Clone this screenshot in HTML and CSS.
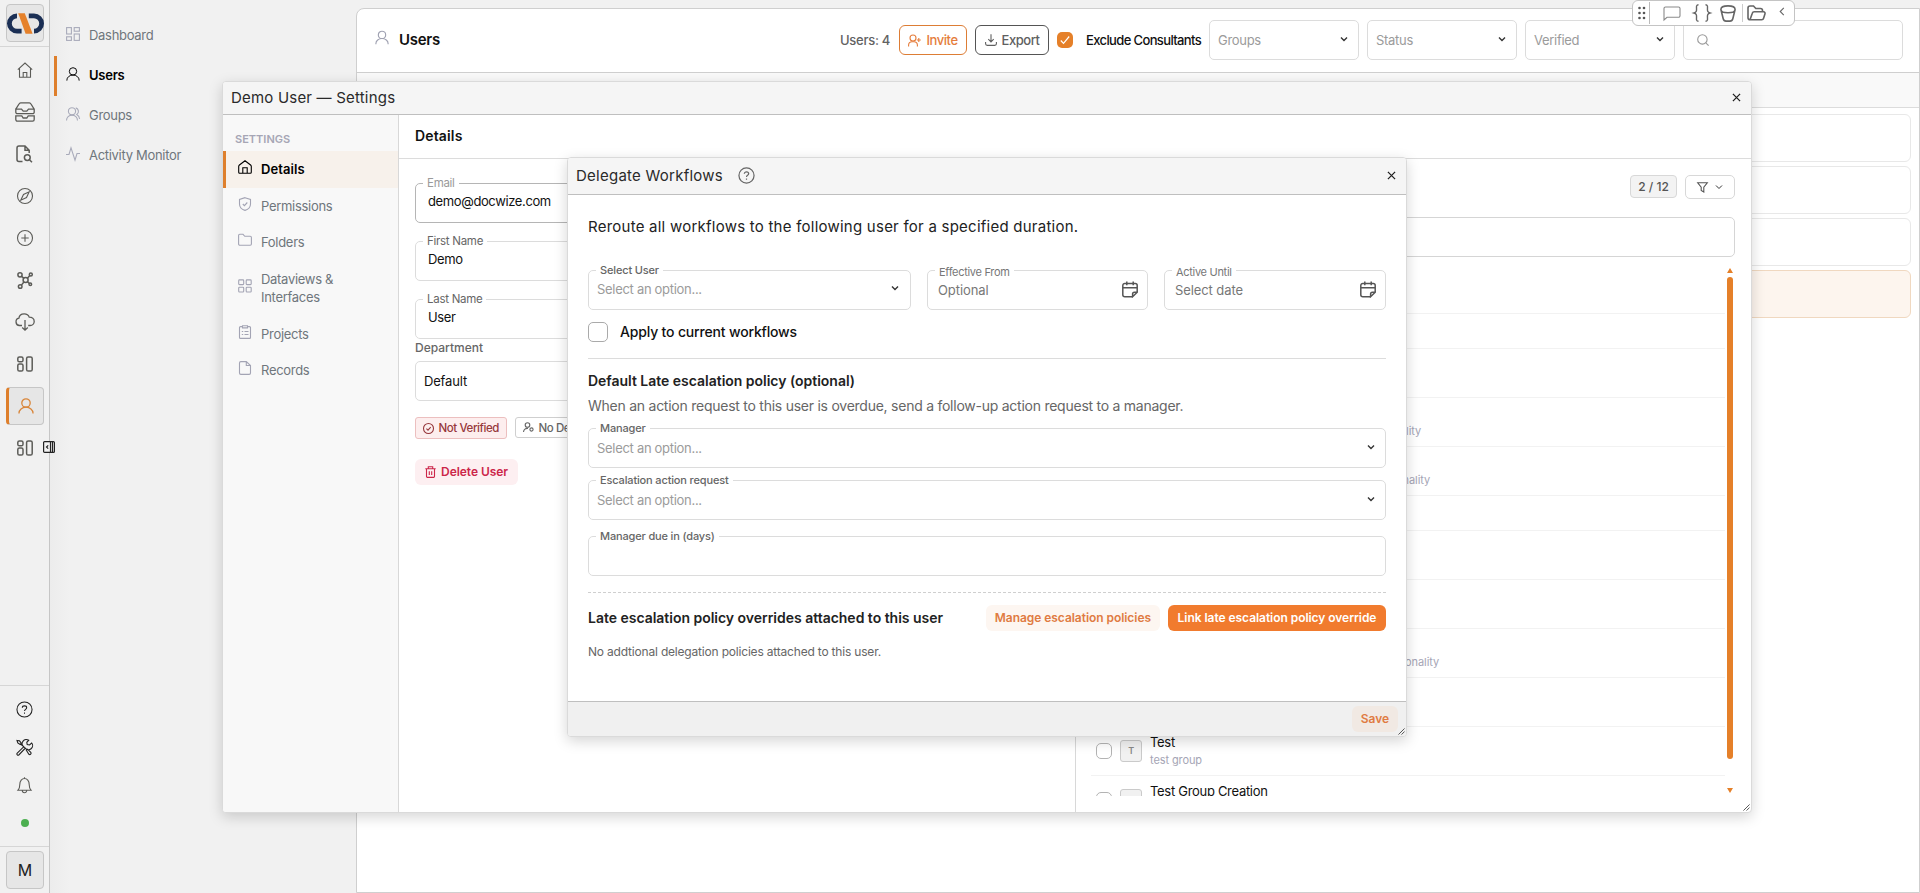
FILE: index.html
```html
<!DOCTYPE html>
<html lang="en">
<head>
<meta charset="utf-8">
<title>Users</title>
<link rel="stylesheet" href="styles.css">
</head>
<body>
<svg class="defs" aria-hidden="true">
  <symbol id="user" viewBox="0 0 16 16"><circle cx="8" cy="5" r="4.2"/><path d="M1 15.6v-.6a7 5.8 0 0 1 14 0v.6"/></symbol>
  <symbol id="chev" viewBox="0 0 10 10"><path d="M2 3.500 5 6.500 8 3.500"/></symbol>
  <symbol id="close" viewBox="0 0 10 10"><path d="M1 1 9 9M9 1 1 9"/></symbol>
  <symbol id="help" viewBox="0 0 18 18"><circle cx="9" cy="9" r="8"/><path d="M6.700 7.200C6.700 4.500 11.300 4.500 11.300 7.200 11.300 8.900 9 8.800 9 10.600M9 12.300v1.200"/></symbol>
  <symbol id="home" viewBox="0 0 16 16"><path d="M.8 7.600 8 1 15.200 7.600M2.500 6.200V15.200H13.500V6.200M6.200 15V10.500H9.800V15"/></symbol>
  <symbol id="board" viewBox="0 0 16 16"><rect x=".8" y="1" width="5.200" height="4.800" rx="1.600"/><rect x=".8" y="8" width="5.200" height="7" rx="1.600"/><rect x="9.600" y="1" width="5.600" height="14" rx="1.600"/></symbol>
  <symbol id="cal" viewBox="0 0 16 17"><path d="M15.200 11.500V4.500a2 2 0 0 0-2-2H2.800a2 2 0 0 0-2 2v9.200a2 2 0 0 0 2 2h7.600M.8 6.800h14.400M4.800.6v3.600M11.200.6v3.600M15.200 11.300l-4.600 4.400v-2.600a1.800 1.800 0 0 1 1.800-1.800Z"/></symbol>
  <symbol id="grip" viewBox="0 0 8 8"><path d="M.5 7.500 7.500.5M4 7.500 7.500 4"/></symbol>
</svg>

<div class="app">
  <nav class="rail">
    <div class="rail-logo"><div class="tile">
      <svg width="37" height="21" viewBox="0 0 37 21"><g fill="none" stroke="#1b2f55" stroke-width="4.800"><path d="M10 2.900A7.600 7.600 0 0 0 10 18.100H14.600"/><path d="M21.800 2.900H27A7.600 7.600 0 0 1 27 18.100"/></g><path d="M11.200.3H17.800L25.600 20.700H18.600Z" fill="#e5812b" stroke="none"/></svg>
    </div></div>
    <div class="rail-main">
      <div class="cell"><svg class="i16"><use href="#home"/></svg></div>
      <div class="cell"><svg class="wide" width="20" height="20" viewBox="0 0 20 20"><path d="M.8 7.200 4 2A2 2 0 0 1 5.700.8h8.600A2 2 0 0 1 16 2l3.200 5.200v3a1.500 1.500 0 0 1-1.500 1.500H2.300A1.500 1.500 0 0 1 .8 10.200V7.200H6.500L8.200 9.200h3.600L13.500 7.200h5.700M.8 13.800H6.800L8.200 16h3.600l1.400-2.200h6v3.800a1.600 1.600 0 0 1-1.600 1.600H2.400A1.600 1.600 0 0 1 .8 17.600Z"/></svg></div>
      <div class="cell"><svg class="bold" width="17" height="18" viewBox="0 0 17 18"><path d="M6.500 16.500H3A2 2 0 0 1 1 14.500V3A2 2 0 0 1 3 1H9L13.200 5.200V8M9 1V5.200H13.200"/><circle cx="11.300" cy="12.600" r="2.900"/><path d="M13.500 14.800 16 17.300"/></svg></div>
      <div class="cell"><svg class="i16" viewBox="0 0 16 16"><circle cx="8" cy="8" r="7.500"/><path d="M12.200 3.800 9.500 9.500 3.800 12.200 6.500 6.500Z"/></svg></div>
      <div class="cell"><svg class="i16" viewBox="0 0 16 16"><circle cx="8" cy="8" r="7.500"/><path d="M8 4.300v7.400M4.300 8h7.400"/></svg></div>
      <div class="cell"><svg class="bold" width="16" height="17" viewBox="0 0 16 17"><circle cx="3" cy="2.800" r="2.100"/><circle cx="13.800" cy="2.500" r="1.500"/><circle cx="8.600" cy="8" r="2.500"/><circle cx="13.300" cy="12.300" r="1.300"/><circle cx="3.200" cy="14.500" r="1.800"/><path d="M4.500 4.400 6.800 6.200M10.400 6.200 12.800 3.600M10.500 9.800 12.300 11.400M6.900 10 4.400 13.100"/></svg></div>
      <div class="cell"><svg class="wide" width="20" height="18" viewBox="0 0 20 18"><path d="M7 12.500H4.500a3.700 3.700 0 0 1-.6-7.300C4.200 2.500 6.500.8 9.200.8c2.500 0 4.300 1.300 5 3.300 2.800 0 5 1.900 5 4.300s-1.800 4.100-4 4.100h-2M10 7v10M7.200 14.500 10 17.200l2.800-2.700"/></svg></div>
      <div class="cell"><svg class="i16 bold"><use href="#board"/></svg></div>
      <div class="cell"><div class="tile tile-on"><svg class="i16"><use href="#user"/></svg></div></div>
      <div class="cell"><svg class="i16 bold"><use href="#board"/></svg></div>
    </div>
    <div class="rail-foot">
      <div class="fcell dark"><svg width="17" height="17"><use href="#help"/></svg></div>
      <div class="fcell dark"><svg width="17" height="17" viewBox="0 0 17 17"><path d="M1 14.300 7.800 7.700 9.300 9.200 2.800 16A1.300 1.300 0 0 1 1 14.300ZM7.800 7.700A4 4 0 0 1 12.700 1.300L10.800 3.300 11.200 5.600 13.500 6 15.700 4A4 4 0 0 1 9.300 9.200M1 1.500 3.500 1.800 5.300 4.200 4.200 5.500 1.800 4ZM4.800 5 6.800 7M10.300 11.200 11.500 10.200 14.800 13.300A1.400 1.400 0 0 1 12.900 15.300Z"/></svg></div>
      <div class="fcell"><svg width="15" height="17" viewBox="0 0 15 17"><path d="M1 13.200C2.500 11.500 2.800 10 2.800 7.500 2.800 4 5 1.500 7.500 1.500S12.200 4 12.200 7.500C12.200 10 12.500 11.500 14 13.200ZM5.300 13.500a2.200 2.200 0 0 0 4.400 0M7.500.3V1.500"/></svg></div>
      <div class="fcell"><span class="dot"></span></div>
    </div>
    <div class="rail-me"><div class="tile">M</div></div>
    <svg class="collapse" viewBox="0 0 12 12"><rect x=".6" y=".6" width="10.800" height="10.800" rx="1"/><path d="M7.500 1v10M9.500 1v10M5.200 4.300 3.500 6 5.200 7.700"/></svg>
  </nav>

  <aside class="side">
    <a class="nav"><svg class="i14" viewBox="0 0 14 14"><rect x=".6" y=".6" width="4.800" height="6.400"/><rect x="8.200" y=".6" width="5.200" height="3.600"/><rect x=".6" y="9.800" width="4.800" height="3.600"/><rect x="8.200" y="7" width="5.200" height="6.400"/></svg>Dashboard</a>
    <a class="nav on"><svg class="i14"><use href="#user"/></svg>Users</a>
    <a class="nav"><svg class="i14" viewBox="0 0 14 14"><circle cx="6" cy="4.300" r="3.600"/><path d="M.5 13.400a5.500 5.300 0 0 1 11 0M9.800.9a3.600 3.600 0 0 1 1 6.500 5.500 5.500 0 0 1 2.800 4.600"/></svg>Groups</a>
    <a class="nav"><svg class="i14" viewBox="0 0 14 14"><path d="M0 7.500H3L5 .8 9 13.200 11 6.500H14"/></svg>Activity Monitor</a>
  </aside>

  <main class="panel">
    <header class="bar">
      <svg class="bar-ico"><use href="#user"/></svg>
      <h1>Users</h1>
      <span class="count">Users: 4</span>
      <button class="btn invite"><svg width="13" height="13" viewBox="0 0 13 13"><circle cx="5" cy="4" r="3"/><path d="M.6 12.500V11A3.400 3.400 0 0 1 4 7.800H6A3.400 3.400 0 0 1 9.400 11v1.500M10.800 4v4M8.800 6h4"/></svg>Invite</button>
      <button class="btn export"><svg width="12" height="12" viewBox="0 0 12 12"><path d="M6 .3V7.700M3.300 5.200 6 7.900 8.700 5.200M.6 8v1.800a1.600 1.600 0 0 0 1.600 1.600h7.600a1.600 1.600 0 0 0 1.600-1.600V8"/></svg>Export</button>
      <span class="check"><svg width="10" height="10" viewBox="0 0 10 10"><path d="M.8 5.500 3.500 8.300 9.200 1.500"/></svg></span>
      <span class="excl">Exclude Consultants</span>
      <div class="sel">Groups<svg class="chev"><use href="#chev"/></svg></div>
      <div class="sel">Status<svg class="chev"><use href="#chev"/></svg></div>
      <div class="sel">Verified<svg class="chev"><use href="#chev"/></svg></div>
      <div class="search"><svg width="12" height="12" viewBox="0 0 12 12"><circle cx="5.400" cy="5.400" r="4.700"/><path d="M8.800 8.800 11.600 11.600"/></svg></div>
    </header>
    <div class="thead"></div>
    <div class="rows"><div></div><div></div><div></div><div class="sel-row"></div></div>
  </main>
</div>

<div class="toolbar">
  <svg width="8" height="14" viewBox="0 0 8 14" class="dots"><circle cx="1.500" cy="2" r="1.300"/><circle cx="6" cy="2" r="1.300"/><circle cx="1.500" cy="7" r="1.300"/><circle cx="6" cy="7" r="1.300"/><circle cx="1.500" cy="12" r="1.300"/><circle cx="6" cy="12" r="1.300"/></svg>
  <i></i>
  <svg class="t-chat" width="18" height="15" viewBox="0 0 18 15"><path d="M1 14V2.500A1.500 1.500 0 0 1 2.500 1h13A1.500 1.500 0 0 1 17 2.500v7.300a1.500 1.500 0 0 1-1.500 1.500H4Z"/></svg>
  <svg class="t-br" width="18" height="18" viewBox="0 0 18 18"><path d="M5.500.8C2 .8 4.300 5 3.300 7.300 2.800 8.500 1 9 1 9s1.800.5 2.300 1.700C4.300 13 2 17.200 5.500 17.200M12.500.8C16 .8 13.700 5 14.700 7.300 15.200 8.500 17 9 17 9s-1.800.5-2.300 1.700C13.700 13 16 17.200 12.500 17.200"/></svg>
  <svg class="t-bk" width="16" height="17" viewBox="0 0 16 17"><path d="M.9 4.500C.9 2.200 4 .9 8 .9S15.100 2.200 15.100 4.500 12 7.800 8 7.800.9 6.800.9 4.500L3.200 13.800C3.600 15.400 4.300 16.100 6 16.100h4c1.700 0 2.400-.7 2.800-2.300L15.100 4.500"/></svg>
  <i class="short"></i>
  <svg class="t-fd" width="19" height="16" viewBox="0 0 19 16"><path d="M3 14.800C1.500 14.800 1 14 1 12.800V3A2 2 0 0 1 3 1H6.500L8.800 3.500H13.500A2 2 0 0 1 15.500 5.500V6.800M3 14.800 5.300 8.200A2 2 0 0 1 7.200 6.800H16.500A1.500 1.500 0 0 1 18 8.800L16.600 13.300A2 2 0 0 1 14.700 14.800Z"/></svg>
  <svg class="t-cv" width="6" height="9" viewBox="0 0 6 9"><path d="M4.800.8 1.200 4.500 4.800 8.200"/></svg>
</div>

<section class="win settings">
  <header class="win-head">Demo User — Settings<svg class="x"><use href="#close"/></svg></header>
  <div class="win-cols">
    <aside class="menu">
      <div class="cap">SETTINGS</div>
      <a class="on"><svg class="i14"><path d="M.7 6.600A2 2 0 0 1 1.400 5L7 .8 12.600 5A2 2 0 0 1 13.300 6.600V12.300A1 1 0 0 1 12.300 13.300H1.700A1 1 0 0 1 .7 12.300ZM4.800 13V7.800H9.200V13"/></svg>Details</a>
      <a><svg class="i14"><path d="M7 .7 12.500 2.500V7C12.500 10.500 10 12.500 7 13.400 4 12.500 1.500 10.500 1.500 7V2.500ZM4.800 7 6.400 8.600 9.300 5.500"/></svg>Permissions</a>
      <a><svg class="i14"><path d="M.6 11V2.500A1.200 1.200 0 0 1 1.800 1.300H5L6.800 3.300H12.200A1.200 1.200 0 0 1 13.400 4.500V11A1.200 1.200 0 0 1 12.200 12.200H1.800A1.200 1.200 0 0 1 .6 11Z"/></svg>Folders</a>
      <a class="two"><svg class="i14"><rect x=".7" y=".9" width="5" height="4.700" rx=".8"/><rect x="8.200" y=".9" width="5" height="4.700" rx=".8"/><rect x=".7" y="8.300" width="5" height="4.700" rx=".8"/><rect x="8.200" y="8.300" width="5" height="4.700" rx=".8"/></svg><span>Dataviews &amp;<br>Interfaces</span></a>
      <a><svg class="i14"><path d="M4.500 1.600H2.500A1 1 0 0 0 1.500 2.600V12.400A1 1 0 0 0 2.500 13.400H11.500A1 1 0 0 0 12.500 12.400V2.600A1 1 0 0 0 11.500 1.600H9.500M4.500.7H9.500V2.900H4.500ZM3.800 6.500H5.200M6.500 6.500H10.500M3.800 9.500H5.200M6.500 9.500H10.500"/></svg>Projects</a>
      <a><svg class="i14"><path d="M8.300.6H2.800A1.300 1.300 0 0 0 1.500 1.900V12.100A1.300 1.300 0 0 0 2.800 13.400H11.200A1.300 1.300 0 0 0 12.500 12.100V4.500ZM8.300.6V4.500H12.500"/></svg>Records</a>
    </aside>
    <div class="content">
      <h2>Details</h2>
      <div class="split">
        <div class="form">
          <fieldset class="fld strong"><legend class="muted">Email</legend>demo@docwize.com</fieldset>
          <fieldset class="fld"><legend>First Name</legend>Demo</fieldset>
          <fieldset class="fld"><legend>Last Name</legend>User</fieldset>
          <label class="dep">Department</label>
          <div class="depbox">Default</div>
          <div class="tags">
            <span class="tag bad"><svg width="11" height="11" viewBox="0 0 11 11"><circle cx="5.500" cy="5.500" r="5"/><path d="M3.400 5.600 5 7.100 7.700 4.200"/></svg>Not Verified</span>
            <span class="tag"><svg width="11" height="11" viewBox="0 0 11 11"><circle cx="4.500" cy="3" r="2.300"/><path d="M.5 10C.8 7.500 2.500 6 5 6.400"/><circle cx="8.500" cy="7.500" r="1.600"/></svg>No Delegate</span>
          </div>
          <button class="del"><svg width="11" height="12" viewBox="0 0 11 12"><path d="M.3 2.800H10.700M3.300 2.600V.7H7.700V2.600M1.500 3V10.200A1.200 1.200 0 0 0 2.700 11.400H8.300A1.200 1.200 0 0 0 9.500 10.200V3M4.300 5.300V9M6.700 5.300V9"/></svg>Delete User</button>
        </div>
        <div class="groups">
          <div class="gtools"><span class="badge">2 / 12</span><span class="filter"><svg width="11" height="11" viewBox="0 0 11 11"><path d="M.7.800H10.300L6.800 5.200V10L4.200 8.500V5.200Z"/></svg><svg class="chev"><use href="#chev"/></svg></span></div>
          <div class="gsearch"></div>
          <div class="gbody">
            <div class="glist">
              <div class="g"></div><div class="g s"></div><div class="g"></div>
              <div class="g"><span class="tail w1">functionality</span></div>
              <div class="g"><span class="tail w2">functionality</span></div>
              <div class="g s"></div><div class="g"></div><div class="g"></div>
              <div class="g"><span class="tail w3">functionality</span></div>
              <div class="g"></div>
              <div class="g row"><span class="box"></span><span class="av">T</span><span class="nm">Test<small>test group</small></span></div>
              <div class="g row"><span class="box"></span><span class="av">T</span><span class="nm">Test Group Creation</span></div>
            </div>
            <div class="sbar"><b class="up"></b><b class="thumb"></b><b class="down"></b></div>
          </div>
        </div>
      </div>
    </div>
  </div>
  <svg class="grip"><use href="#grip"/></svg>
</section>

<section class="win delegate">
  <header class="win-head tall">Delegate Workflows<svg class="hlp"><use href="#help"/></svg><svg class="x"><use href="#close"/></svg></header>
  <div class="dbody">
    <p class="lead">Reroute all workflows to the following user for a specified duration.</p>
    <div class="trio">
      <fieldset class="fld a"><legend>Select User</legend><span class="ph">Select an option...</span><svg class="chev"><use href="#chev"/></svg></fieldset>
      <div class="fld date"><span class="lg">Effective From</span><span>Optional</span><svg width="16" height="17"><use href="#cal"/></svg></div>
      <div class="fld date"><span class="lg">Active Until</span><span>Select date</span><svg width="16" height="17"><use href="#cal"/></svg></div>
    </div>
    <label class="apply"><span class="cb"></span>Apply to current workflows</label>
    <h3>Default Late escalation policy (optional)</h3>
    <p class="para">When an action request to this user is overdue, send a follow-up action request to a manager.</p>
    <fieldset class="fld a low"><legend>Manager</legend><span class="ph">Select an option...</span><svg class="chev"><use href="#chev"/></svg></fieldset>
    <fieldset class="fld a low esc"><legend>Escalation action request</legend><span class="ph">Select an option...</span><svg class="chev"><use href="#chev"/></svg></fieldset>
    <fieldset class="fld a due"><legend>Manager due in (days)</legend></fieldset>
    <div class="over"><h3>Late escalation policy overrides attached to this user</h3><button class="soft">Manage escalation policies</button><button class="solid">Link late escalation policy override</button></div>
    <p class="none">No addtional delegation policies attached to this user.</p>
  </div>
  <footer class="dfoot"><button class="soft save">Save</button></footer>
  <svg class="grip"><use href="#grip"/></svg>
</section>
</body>
</html>
```
FILE: styles.css
```css
* { box-sizing: border-box; }
body { margin: 0; width: 1920px; height: 893px; overflow: hidden; background: #f1f1f1; font: 13px/18px Inter, "Liberation Sans", sans-serif; letter-spacing: -.3px; color: #111; }
h1, h2, h3, p, fieldset { margin: 0; padding: 0; border: 0; min-width: 0; }
button { font: inherit; letter-spacing: inherit; border: 0; margin: 0; padding: 0; }
svg { fill: none; stroke: currentColor; stroke-width: 1.1; flex: none; overflow: visible; }
.defs { position: absolute; width: 0; height: 0; }
.i16 { width: 16px; height: 16px; }
.i14 { width: 14px; height: 14px; }
.bold { stroke-width: 1.5; }
.wide { stroke-width: 1.3; }
.chev { width: 10px; height: 10px; stroke-width: 1.4; color: #333; }
.app { display: flex; height: 893px; }

.rail { position: relative; width: 50px; flex: none; border-right: 1px solid #c6c6c6; display: flex; flex-direction: column; color: #5c5c58; background: #f1f1f1; }
.rail-logo { height: 47px; padding: 4px 0 0 6px; border-bottom: 1px solid #d6d6d6; }
.tile { width: 38px; height: 38px; border: 1px solid #c6c6c6; border-radius: 4px; background: #e6e6e6; display: flex; align-items: center; justify-content: center; color: #222; font-size: 16px; letter-spacing: 0; }
.rail-main { flex: 1; padding: 2px 0 0; }
.cell { height: 42px; display: flex; align-items: center; justify-content: center; }
.cell .tile { margin-left: 1px; }
.cell .tile-on { border-left: 3px solid #de7f2c; color: #d9863a; }
.tile-on svg { stroke-width: 1.3; }
.rail-foot { border-top: 1px solid #d6d6d6; height: 161px; padding: 4px 0 0; }
.fcell { height: 38px; display: flex; align-items: center; justify-content: center; }
.dark { color: #222; }
.dot { width: 8px; height: 8px; border-radius: 50%; background: #4caf50; }
.rail-me { border-top: 1px solid #d6d6d6; height: 47px; padding: 4px 0 0 6px; }
.collapse { position: absolute; left: 43px; top: 441px; width: 12px; height: 12px; color: #222; stroke-width: 1.2; background: #f1f1f1; z-index: 1; }

.side { width: 306px; flex: none; padding: 16px 0 0 4px; background: linear-gradient(90deg, #ececec, #f1f1f1 20px); }
.nav { height: 40px; display: flex; align-items: center; gap: 9px; padding: 0 0 2px 9px; border-left: 3px solid transparent; color: #6f767c; }
.nav svg { position: relative; top: -1.5px; color: #a9abba; }
.on { color: #000; font-weight: 600; }
.nav.on { border-left-color: #de7f2c; letter-spacing: -.25px; }
.nav.on svg, .menu .on svg { color: #000; }

.panel { width: 1564px; height: 885px; margin-top: 8px; background: #fff; border: 1px solid #cfcfcf; border-top-left-radius: 8px; }
.bar { height: 64px; border-bottom: 1px solid #cfcfcf; display: flex; align-items: center; padding: 0 16px 1px 18px; }
.bar-ico { width: 14px; height: 15px; color: #a0a2b2; stroke-width: 1.3; position: relative; top: -3px; }
h1 { font-size: 15px; font-weight: 600; margin: 0 auto 0 10px; }
.count { width: 50px; margin-right: 9px; color: #626262; font-weight: 500; white-space: nowrap; letter-spacing: -.28px; }
.btn { height: 30px; border-radius: 6px; background: #fff; display: flex; align-items: center; justify-content: center; gap: 5px; font-weight: 500; margin-right: 8px; letter-spacing: -.45px; }
.invite { width: 68px; border: 1px solid #dd7d35; color: #e57d3c; }
.export { width: 74px; border: 1px solid #555; color: #606060; }
.check { width: 16px; height: 16px; border-radius: 5px; background: #e58029; color: #fff; display: flex; align-items: center; justify-content: center; }
.check svg { stroke-width: 1.2; }
.excl { width: 115px; margin: 0 8px 0 13px; font-weight: 500; letter-spacing: -.63px; white-space: nowrap; }
.sel { width: 150px; height: 40px; border: 1px solid #dcdcdc; border-radius: 5px; margin-right: 8px; padding: 0 9px 0 8px; display: flex; align-items: center; justify-content: space-between; color: #9b9b9b; }
.sel .chev { margin-top: -2px; }
.search { width: 220px; height: 40px; border: 1px solid #dcdcdc; border-radius: 5px; padding: 13px 0 0 13px; color: #999; line-height: 0; }
.thead { height: 35px; background: #f9f9f9; border-bottom: 1px solid #dcdcdc; }
.rows { padding: 6px 8px 0; display: grid; gap: 4px; }
.rows div { height: 48px; border: 1px solid #e8e8e8; border-radius: 6px; }
.rows .sel-row { background: #fdf5ee; border-color: #f0d8c0; }

.toolbar { position: absolute; left: 1632px; top: 0; width: 163px; height: 26px; border: 1px solid #c4c4c4; border-radius: 6px; background: #fff; display: flex; align-items: center; color: #666; padding-left: 5px; }
.toolbar i { width: 1px; height: 22px; background: #bbb; margin-left: 3px; }
.toolbar .short { height: 18px; margin-left: 6px; background: #ccc; }
.dots { fill: #555; stroke: none; }
.t-chat { margin-left: 13px; color: #8a8a8a; }
.t-br { margin-left: 12px; stroke-width: 1.4; }
.t-bk { margin-left: 9px; stroke-width: 1.6; }
.t-fd { margin-left: 4px; stroke-width: 1.6; }
.t-cv { margin: -4px 0 0 13px; }

.win { position: absolute; background: #fff; border: 1px solid #dadada; border-radius: 4px; box-shadow: 0 4px 14px rgba(0,0,0,.17); display: flex; flex-direction: column; overflow: hidden; }
.settings { left: 222px; top: 81px; width: 1530px; height: 732px; }
.delegate { left: 567px; top: 157px; width: 840px; height: 580px; }
.win-head { height: 33px; flex: none; background: #f5f5f5; border-bottom: 1px solid #bfbfbf; display: flex; align-items: center; padding: 0 10px 1px 8px; font-size: 15px; letter-spacing: .2px; color: #2a2a2a; }
.tall { height: 37px; letter-spacing: .25px; }
.x { width: 9px; height: 9px; margin-left: auto; color: #222; stroke-width: 1.4; }
.hlp { width: 17px; height: 17px; margin-left: 15px; color: #666; stroke-width: 1.3; }
.grip { position: absolute; right: 1px; bottom: 1px; width: 7px; height: 7px; color: #444; stroke-width: 1; }
.win-cols { flex: 1; display: flex; min-height: 0; }
.menu { width: 176px; background: #f8f8f8; border-right: 1px solid #d8d8d8; color: #6f767c; }
.cap { height: 36px; padding: 15px 0 0 12px; font-size: 11px; font-weight: 600; letter-spacing: 0; color: #a6a6b5; }
.menu a { height: 36.5px; padding-left: 12px; border-left: 3px solid transparent; display: flex; align-items: center; gap: 9px; line-height: 18.5px; }
.menu svg { position: relative; top: -2px; color: #a3a4b4; }
.menu .two { height: 55px; }
.menu a.on { background: #f7f1eb; border-left-color: #de7f2c; color: #000; letter-spacing: .1px; }
.content { flex: 1; display: flex; flex-direction: column; min-width: 0; }
h2 { height: 44px; border-bottom: 1px solid #dcdcdc; padding: 12px 0 0 16px; font-size: 14px; font-weight: 600; letter-spacing: .15px; line-height: 18px; }
.split { flex: 1; display: flex; min-height: 0; }
.form { width: 677px; border-right: 1px solid #d8d8d8; padding: 17px 16px 0; }
.fld { height: 47px; border: 1px solid #dcdcdc; border-radius: 5px; font-size: 13px; }
.form .fld { padding: 1px 0 0 12px; margin-bottom: 11px; letter-spacing: -.38px; }
.form .strong { border-color: #b5b5b5; }
.fld legend { font-size: 11.5px; line-height: 15px; letter-spacing: -.28px; color: #666; padding: 0 4px; margin-left: -5px; }
.fld .muted { color: #9a9a9a; }
.dep { display: block; margin-top: -9px; font-size: 12px; font-weight: 500; letter-spacing: 0; line-height: 14px; color: #666; height: 20px; }
.depbox { height: 40px; border: 1px solid #dcdcdc; border-radius: 5px; padding: 10px 8px; letter-spacing: -.17px; }
.tags { display: flex; gap: 8px; margin-top: 16px; }
.tag { height: 21px; border: 1px solid #cfcfcf; border-radius: 3px; padding: 0 7px; display: flex; align-items: center; gap: 4.5px; font-size: 11.5px; font-weight: 500; color: #666; letter-spacing: -.42px; }
.bad { height: 22px; background: #fdeeee; border-color: #ecbfbf; color: #97383c; }
.del { margin-top: 20px; width: 103px; height: 26px; border-radius: 6px; background: #fdeff1; color: #cc2549; font-size: 12px; font-weight: 600; letter-spacing: -.05px; display: flex; align-items: center; justify-content: center; gap: 5px; }
.groups { flex: 1; padding: 16px 16px 0 15px; }
.gtools { display: flex; justify-content: flex-end; gap: 8px; height: 42px; }
.badge { width: 47px; height: 23px; border: 1px solid #d8d8d8; border-radius: 4px; background: #f3f3f3; text-align: center; line-height: 21px; font-size: 12px; font-weight: 500; color: #555; letter-spacing: 0; }
.filter { width: 50px; height: 24px; border: 1px solid #d8d8d8; border-radius: 5px; display: flex; align-items: center; justify-content: center; gap: 6px; color: #555; }
.filter .chev { stroke-width: 1; }
.gsearch { height: 40px; border: 1px solid #d5d5d5; border-radius: 5px; }
.gbody { margin-top: 8px; height: 531px; display: flex; }
.glist { flex: 1; overflow: hidden; }
.g { height: 49px; border-bottom: 1px solid #f2f2f2; }
.s { height: 35px; }
.tail { display: block; padding: 25px 0 0 60px; text-align: right; font-size: 11px; line-height: 16px; letter-spacing: -.1px; color: #a5a5b5; }
.w1 { width: 330px; }
.w2 { width: 339px; }
.w3 { width: 348px; }
.row { display: flex; padding-left: 5px; }
.box { width: 16px; height: 16px; margin-top: 16px; border: 1px solid #b3b3b3; border-radius: 5px; }
.av { width: 22px; height: 22px; margin: 13px 8px 0; border: 1px solid #cacaca; border-radius: 3px; background: #f1f1f1; color: #888; font-size: 9px; font-weight: 600; text-align: center; line-height: 19px; }
.nm { padding-top: 6px; line-height: 19px; }
.nm small { display: block; font-size: 11px; line-height: 16px; color: #a5a5b5; letter-spacing: -.1px; }
.sbar { width: 10px; padding: 3px 2px 0; display: flex; flex-direction: column; }
.up { border: 3px solid transparent; border-top: 0; border-bottom: 5px solid #e58029; height: 5px; }
.thumb { height: 482px; margin: 4px 0 29px; background: #e58029; border-radius: 3px; }
.down { border: 3px solid transparent; border-bottom: 0; border-top: 5px solid #e58029; height: 5px; }

.dbody { flex: 1; padding: 22px 20px 0; }
.lead { font-size: 15px; line-height: 20px; letter-spacing: .24px; height: 45px; color: #222; }
.trio { display: grid; grid-template-columns: 323px 221px 222px; column-gap: 16px; align-items: end; height: 48px; }
.a { position: relative; display: flex; padding: 2px 10px 0 8px; justify-content: space-between; }
.fld.a legend { font-size: 11px; font-weight: 500; letter-spacing: -.15px; margin-left: -1px; }
.a .chev { margin-top: 3px; }
.low { padding-top: 3px; padding-right: 9px; }
.ph { color: #9b9b9b; }
.date { height: 40px; display: flex; justify-content: space-between; align-items: center; position: relative; padding: 0 9px 1px 10px; color: #777; letter-spacing: -.09px; }
.date svg { color: #555; stroke-width: 1.5; }
.lg { position: absolute; left: 7px; top: -6px; background: #fff; padding: 0 4px; font-size: 11px; line-height: 15px; letter-spacing: -.3px; }
.apply { display: flex; align-items: center; gap: 12px; height: 49px; border-bottom: 1px solid #dcdcdc; padding-bottom: 4px; font-size: 14px; font-weight: 500; letter-spacing: -.17px; color: #111; }
.cb { width: 20px; height: 20px; border: 1px solid #aaa; border-radius: 5px; }
h3 { font-size: 14px; font-weight: 600; line-height: 20px; letter-spacing: -.02px; color: #222; }
.apply + h3 { margin-top: 12px; }
.para { font-size: 14px; line-height: 20px; letter-spacing: -.25px; color: #666; margin: 5px 0; }
.esc { margin-top: 5px; }
.due { margin-top: 9px; }
.over { display: flex; align-items: center; gap: 8px; border-top: 1px dashed #cfcfcf; margin-top: 16px; padding-top: 12px; }
.over h3 { margin-right: auto; }
.soft, .solid { height: 26px; border-radius: 6px; padding: 0 9px; font-size: 12px; font-weight: 600; letter-spacing: -.05px; }
.soft { background: #fdf6f1; color: #e07b42; }
.solid { width: 218px; background: #f17b2e; color: #fff; }
.none { margin-top: 12px; font-size: 12px; letter-spacing: -.19px; color: #666; }
.dfoot { height: 35px; border-top: 1px solid #bfbfbf; background: #f0f0f0; display: flex; justify-content: flex-end; padding: 4px 8px 0; }
.save { background: #f1e9e3; }
```
